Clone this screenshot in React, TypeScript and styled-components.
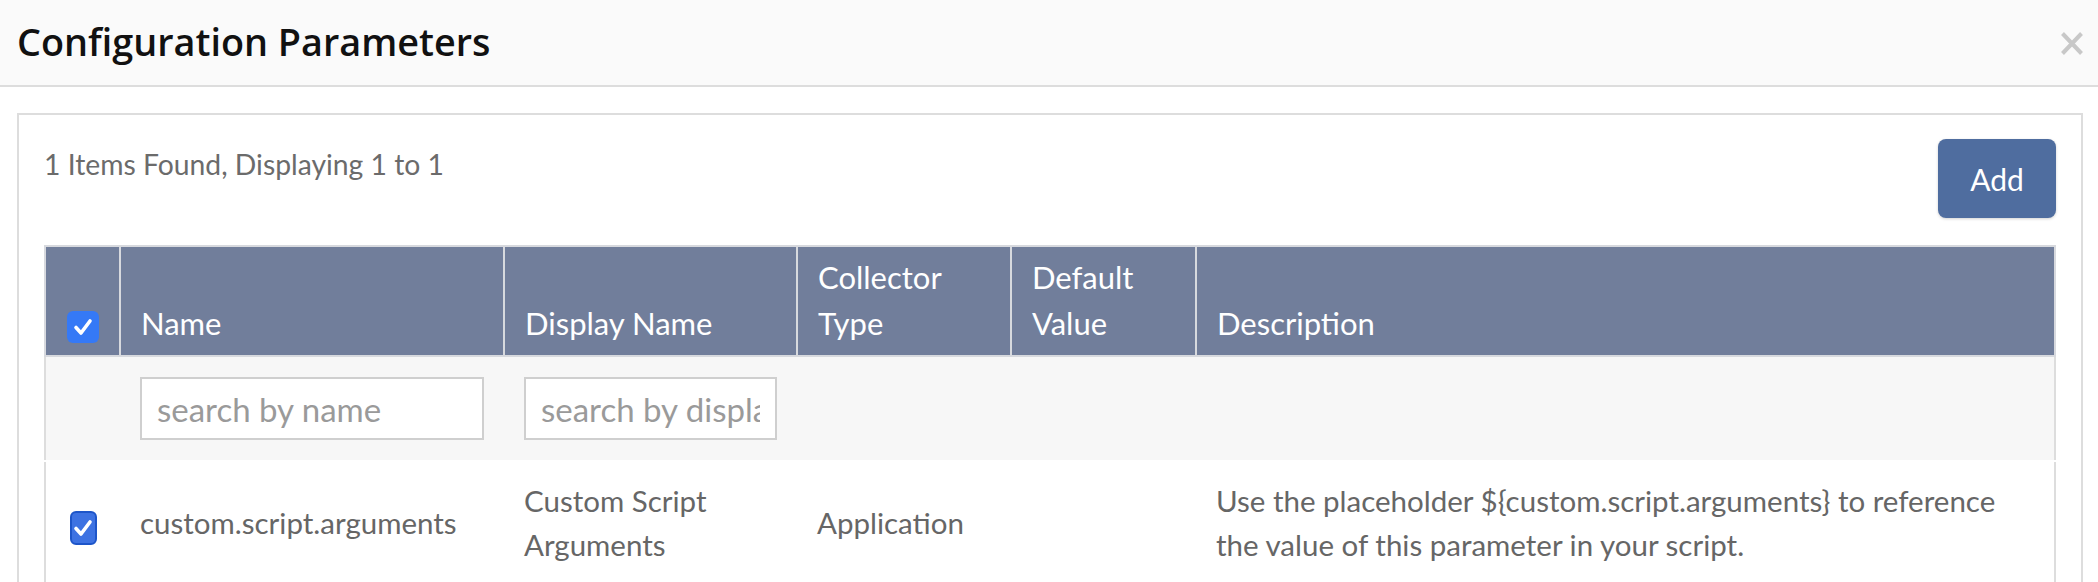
import styled, { createGlobalStyle } from "styled-components";

const GlobalStyle = createGlobalStyle`
  html, body {
    margin: 0;
    padding: 0;
    background: #fff;
  }
  body {
    font-family: Lato, "Liberation Sans", sans-serif;
  }
`;

const Modal = styled.div`
  width: 2098px;
`;

const Header = styled.div`
  height: 85px;
  display: flex;
  align-items: center;
  justify-content: space-between;
  padding: 0 15px 0 17px;
  background: #fafafa;
  border-bottom: 2px solid #ddd;
`;

const Title = styled.h4`
  margin: 0;
  padding-bottom: 2px;
  font-family: "Open Sans", sans-serif;
  font-weight: 600;
  font-size: 37.8px;
  color: #111;
`;

const CloseButton = styled.button`
  display: flex;
  background: none;
  border: 0;
  padding: 0;
  margin-top: 2px;
  cursor: pointer;
`;

const Body = styled.div`
  padding: 26px 15px 0 17px;
`;

const Panel = styled.div`
  border: 2px solid #ddd;
  border-bottom: 0;
  padding: 24px 25px 0;
  min-height: 500px;
`;

const Toolbar = styled.div`
  display: flex;
  justify-content: space-between;
  align-items: flex-start;
  margin-bottom: 27px;
`;

const Count = styled.div`
  padding-top: 3px;
  font-size: 28.3px;
  line-height: 45px;
  color: #6b6b6b;
`;

const AddButton = styled.button`
  width: 118px;
  height: 79px;
  border: 0;
  border-radius: 8px;
  background: #4f6d9f;
  color: #fff;
  font-family: Lato, "Liberation Sans", sans-serif;
  font-size: 30px;
  box-shadow: 0 1px 3px rgba(0, 0, 0, 0.18);
  cursor: pointer;
`;

const Table = styled.table`
  width: 100%;
  table-layout: fixed;
  border-collapse: collapse;
  border: 2px solid #ddd;
`;

const HeadRow = styled.tr`
  height: 110px;
`;

const HeadCell = styled.th<{ $center?: boolean }>`
  background: #717e9b;
  color: #fff;
  font-weight: 400;
  font-size: 31px;
  line-height: 46px;
  text-align: ${(p) => (p.$center ? "center" : "left")};
  vertical-align: bottom;
  padding: 0 20px ${(p) => (p.$center ? "12px" : "9px")};
  border: 2px solid #d7d9de;
`;

const FilterCell = styled.td`
  background: #f7f7f7;
  padding: 20px;
`;

const SearchInput = styled.input`
  display: block;
  width: 100%;
  height: 63px;
  box-sizing: border-box;
  border: 2px solid #cfcfcf;
  background: #fff;
  padding: 0 15px;
  font-family: Lato, "Liberation Sans", sans-serif;
  font-size: 33px;
  color: #555;
  outline: none;

  &::placeholder {
    color: #9a9a9a;
  }
`;

const Cell = styled.td<{ $center?: boolean }>`
  border-top: 2px solid #fff;
  padding: 17px 20px 25px;
  vertical-align: middle;
  text-align: ${(p) => (p.$center ? "center" : "left")};
  font-size: 29.5px;
  line-height: 44px;
  color: #666;
`;

const Description = styled.div`
  max-width: 800px;
`;

const CheckBox = styled.span<{ $w: number; $h: number; $row?: boolean }>`
  display: inline-flex;
  align-items: center;
  justify-content: center;
  box-sizing: border-box;
  width: ${(p) => p.$w}px;
  height: ${(p) => p.$h}px;
  border-radius: 6px;
  vertical-align: bottom;
  background: ${(p) => (p.$row ? "#3d72e2" : "#3579f6")};
  border: ${(p) => (p.$row ? "2px solid #1d55c9" : "0")};
`;

const Check = ({ w, h, row }: { w: number; h: number; row?: boolean }) => (
  <CheckBox $w={w} $h={h} $row={row}>
    <svg width="20" height="18" viewBox="0 0 20 18">
      <path
        d="M3 9.5 L8 15 L17 3"
        fill="none"
        stroke="#fff"
        strokeWidth="3.6"
        strokeLinecap="round"
        strokeLinejoin="round"
      />
    </svg>
  </CheckBox>
);

const App = () => {
  return (
    <>
      <GlobalStyle />
      <Modal>
        <Header>
          <Title>Configuration Parameters</Title>
          <CloseButton aria-label="close">
            <svg width="22" height="23" viewBox="0 0 22 23">
              <path d="M1.5 1.5 L20.5 21.5 M20.5 1.5 L1.5 21.5" stroke="#c8c8c8" strokeWidth="4" />
            </svg>
          </CloseButton>
        </Header>
        <Body>
          <Panel>
            <Toolbar>
              <Count>1 Items Found, Displaying 1 to 1</Count>
              <AddButton>Add</AddButton>
            </Toolbar>
            <Table>
              <colgroup>
                <col style={{ width: 75 }} />
                <col style={{ width: 384 }} />
                <col style={{ width: 293 }} />
                <col style={{ width: 214 }} />
                <col style={{ width: 185 }} />
                <col />
              </colgroup>
              <thead>
                <HeadRow>
                  <HeadCell $center>
                    <Check w={32} h={32} />
                  </HeadCell>
                  <HeadCell>Name</HeadCell>
                  <HeadCell>Display Name</HeadCell>
                  <HeadCell>Collector Type</HeadCell>
                  <HeadCell>Default Value</HeadCell>
                  <HeadCell>Description</HeadCell>
                </HeadRow>
              </thead>
              <tbody>
                <tr>
                  <FilterCell />
                  <FilterCell>
                    <SearchInput placeholder="search by name" />
                  </FilterCell>
                  <FilterCell>
                    <SearchInput placeholder="search by display name" />
                  </FilterCell>
                  <FilterCell />
                  <FilterCell />
                  <FilterCell />
                </tr>
                <tr>
                  <Cell $center>
                    <Check w={27} h={34} row />
                  </Cell>
                  <Cell>custom.script.arguments</Cell>
                  <Cell>Custom Script Arguments</Cell>
                  <Cell>Application</Cell>
                  <Cell></Cell>
                  <Cell>
                    <Description>
                      Use the placeholder ${"{custom.script.arguments}"} to reference the value of this
                      parameter in your script.
                    </Description>
                  </Cell>
                </tr>
              </tbody>
            </Table>
          </Panel>
        </Body>
      </Modal>
    </>
  );
};

export default App;
